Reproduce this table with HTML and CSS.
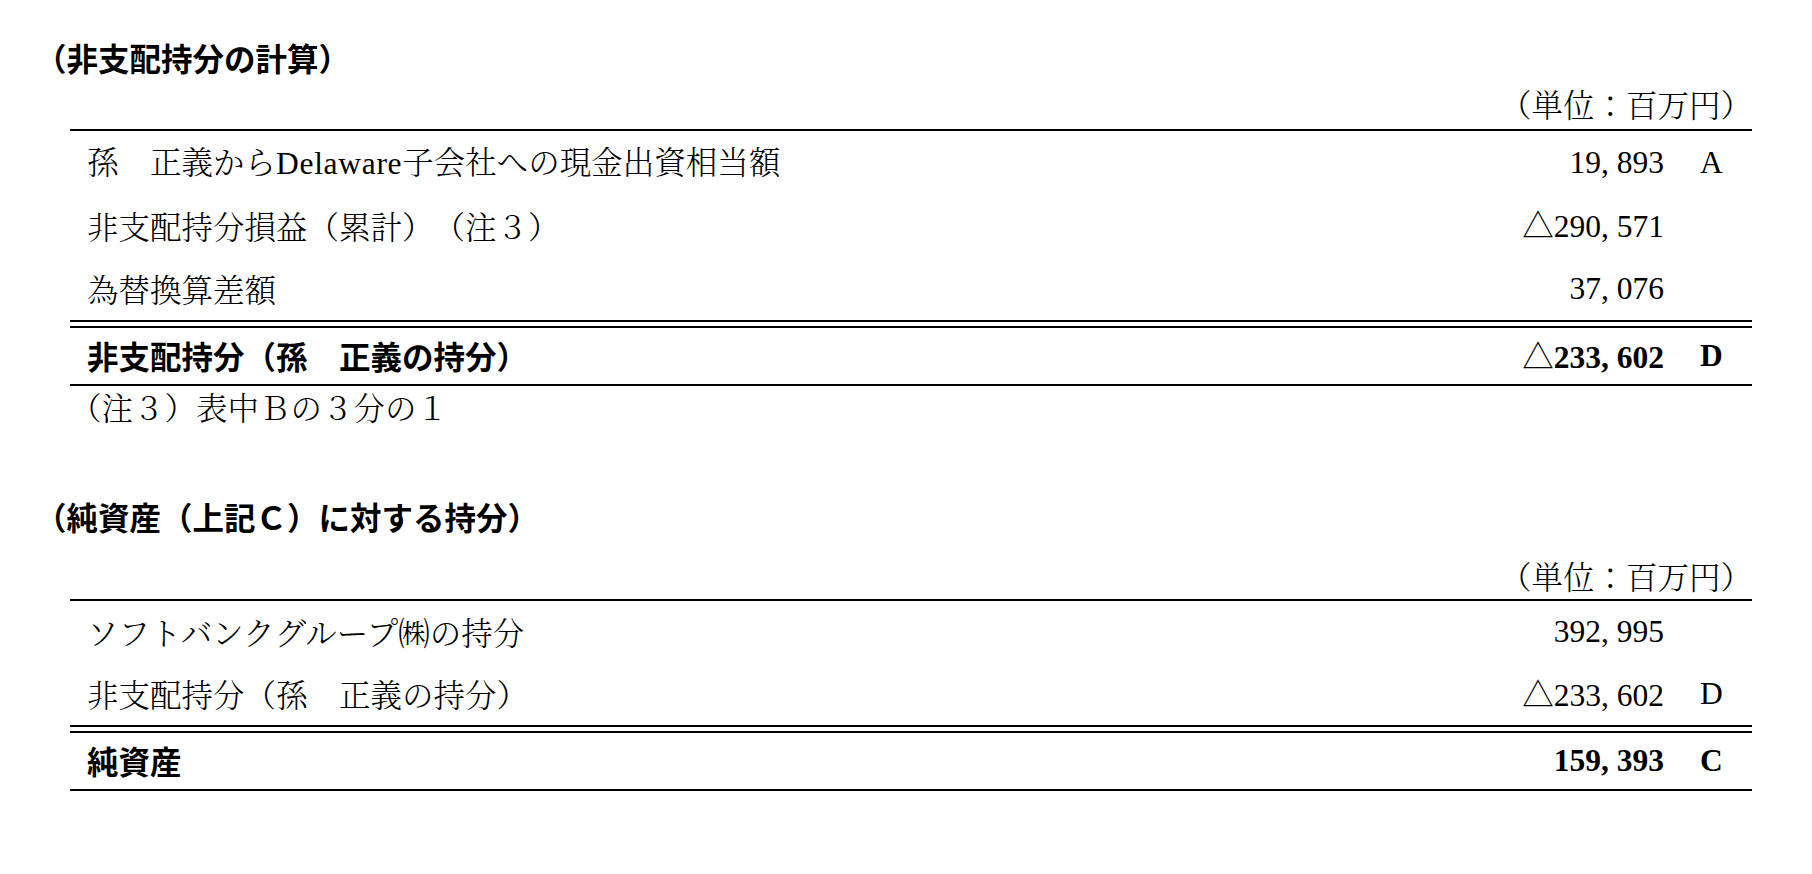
FILE: index.html
```html
<!DOCTYPE html>
<html lang="ja">
<head>
<meta charset="utf-8">
<title>非支配持分の計算</title>
<link rel="stylesheet" href="styles.css">
</head>
<body>
<main class="page">
  <section class="block block-first">
    <h2 class="heading">（非支配持分の計算）</h2>
    <div class="sheet">
      <div class="unit">（単位：百万円）</div>
      <div class="table table-a">
        <div class="row">
          <div class="label">孫　正義から<span class="latin">Delaware</span>子会社への現金出資相当額</div>
          <div class="num">19<span class="comma">,</span>893</div>
          <div class="mark">A</div>
        </div>
        <div class="row">
          <div class="label">非支配持分損益（累計）（注３）</div>
          <div class="num"><span class="tri">△</span>290<span class="comma">,</span>571</div>
          <div class="mark"></div>
        </div>
        <div class="row row-last">
          <div class="label">為替換算差額</div>
          <div class="num">37<span class="comma">,</span>076</div>
          <div class="mark"></div>
        </div>
        <div class="row total">
          <div class="label">非支配持分（孫　正義の持分）</div>
          <div class="num"><span class="tri">△</span>233<span class="comma">,</span>602</div>
          <div class="mark">D</div>
        </div>
      </div>
      <div class="note">（注３）表中Ｂの３分の１</div>
    </div>
  </section>

  <section class="block block-second">
    <h2 class="heading">（純資産（上記Ｃ）に対する持分）</h2>
    <div class="sheet">
      <div class="unit unit-b">（単位：百万円）</div>
      <div class="table table-b">
        <div class="row">
          <div class="label">ソフトバンクグループ㈱の持分</div>
          <div class="num">392<span class="comma">,</span>995</div>
          <div class="mark"></div>
        </div>
        <div class="row row-last">
          <div class="label">非支配持分（孫　正義の持分）</div>
          <div class="num"><span class="tri">△</span>233<span class="comma">,</span>602</div>
          <div class="mark">D</div>
        </div>
        <div class="row total">
          <div class="label">純資産</div>
          <div class="num">159<span class="comma">,</span>393</div>
          <div class="mark">C</div>
        </div>
      </div>
    </div>
  </section>
</main>
</body>
</html>
```
FILE: styles.css
```css
html, body {
  margin: 0;
  padding: 0;
  background: #ffffff;
  color: #000000;
}

body {
  font-family: "Noto Serif CJK JP", "IPAexMincho", "IPAMincho", "Noto Sans CJK JP", serif;
  font-size: 31.5px;
  text-spacing-trim: space-all;
}

.page {
  padding: 37px 60px 0 35px;
}

.heading {
  margin: 0;
  font-family: "Noto Sans CJK JP", sans-serif;
  font-size: 31.5px;
  font-weight: 700;
  line-height: 40px;
}

.block-second {
  margin-top: 69px;
}

.sheet {
  margin-left: 35px;
}

.unit {
  margin-top: 7px;
  margin-bottom: 5px;
  line-height: 40px;
  text-align: right;
  font-weight: 300;
}

.unit-b {
  margin-top: 20px;
  margin-bottom: 3px;
}

.table {
  border-top: 2px solid #000;
}

.row {
  display: flex;
  align-items: center;
  height: 63px;
  padding: 0 25px 0 17px;
  line-height: 1;
  font-weight: 300;
}

.table-b .row {
  height: 62px;
}

.row-last {
  border-bottom: 2px solid #000;
}

.row.total {
  height: 56px;
  margin-top: 4px;
  border-top: 2px solid #000;
  border-bottom: 2px solid #000;
  font-weight: 700;
}

.table-b .row.total {
  height: 56px;
}

.label {
  flex: 1;
  white-space: nowrap;
}

.total .label {
  font-family: "Noto Sans CJK JP", sans-serif;
}

.latin {
  font-family: "Liberation Serif", serif;
  letter-spacing: 0.7px;
}

.num {
  font-family: "Liberation Serif", "Noto Sans CJK JP", serif;
  text-align: right;
  white-space: nowrap;
}

.tri {
  font-family: "Noto Sans CJK JP", sans-serif;
  font-weight: 400;
}

.comma {
  margin-right: 0.25em;
}

.mark {
  width: 31.5px;
  margin-left: 31.5px;
  text-align: center;
  font-family: "Liberation Serif", serif;
}

.note {
  margin-top: 1px;
  line-height: 40px;
  font-weight: 300;
}
```
